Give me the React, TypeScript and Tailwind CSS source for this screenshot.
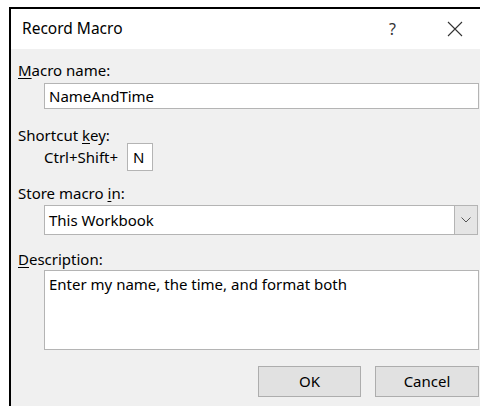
import { useState } from 'react';

function Label({ pre = '', acc, post }: { pre?: string; acc: string; post: string }) {
  return (
    <div className="h-[16px] leading-[16px] text-[15px] text-[#000]">
      {pre}
      <u className="underline-offset-2">{acc}</u>
      {post}
    </div>
  );
}

export default function App() {
  const [name, setName] = useState('NameAndTime');
  const [key, setKey] = useState('N');
  const [desc, setDesc] = useState('Enter my name, the time, and format both');

  return (
    <div
      className="h-[406px] w-[480px] overflow-hidden bg-white pl-[9px] pt-[7px]"
      style={{ fontFamily: '"Noto Sans", "Liberation Sans", sans-serif' }}
    >
      <div className="flex h-full flex-col border-l-2 border-t-2 border-black">
        {/* title bar */}
        <div className="flex h-[40px] shrink-0 items-center bg-white pl-[11px]">
          <span className="text-[15.5px] text-[#000]">Record Macro</span>
          <span className="ml-auto text-[16px] text-[#333]">?</span>
          <button className="ml-[51px] mr-[17px] flex h-[16px] w-[16px] items-center justify-center">
            <svg width="16" height="16" viewBox="0 0 16 16" fill="none" stroke="#333" strokeWidth="1.1">
              <path d="M1 1L15 15M15 1L1 15" />
            </svg>
          </button>
        </div>

        {/* form body */}
        <div className="flex flex-1 flex-col bg-[#f0f0f0] pl-[7px] pr-[1px] pt-[13px]">
          <Label acc="M" post="acro name:" />
          <input
            value={name}
            onChange={(e) => setName(e.target.value)}
            className="ml-[26px] mt-[5px] h-[26px] border border-[#b4b4b4] bg-white px-[4px] text-[15px] text-[#000] outline-none"
          />

          <div className="mt-[18px]">
            <Label pre="Shortcut " acc="k" post="ey:" />
          </div>
          <div className="ml-[26px] flex items-center">
            <span className="text-[15px] text-[#000]">Ctrl+Shift+</span>
            <input
              value={key}
              onChange={(e) => setKey(e.target.value)}
              className="ml-[9px] h-[28px] w-[26px] border border-[#b4b4b4] bg-white px-[5px] text-[15px] text-[#000] outline-none"
            />
          </div>

          <div className="mt-[14px]">
            <Label pre="Store macro " acc="i" post="n:" />
          </div>
          <div className="ml-[26px] mr-[1px] mt-[4px] flex h-[30px] border border-[#b4b4b4] bg-white">
            <span className="flex flex-1 items-center px-[4px] text-[15px] text-[#000]">This Workbook</span>
            <span className="flex w-[23px] items-center justify-center border-l border-[#b4b4b4] bg-[#e5e5e5]">
              <svg width="10" height="6" viewBox="0 0 10 6" fill="none" stroke="#555" strokeWidth="1">
                <path d="M0.5 0.5L5 5L9.5 0.5" />
              </svg>
            </span>
          </div>

          <div className="mt-[16px]">
            <Label acc="D" post="escription:" />
          </div>
          <textarea
            value={desc}
            onChange={(e) => setDesc(e.target.value)}
            className="ml-[26px] mt-[3px] h-[80px] resize-none border border-[#b4b4b4] bg-white px-[4px] pt-[3px] text-[15px] leading-[20px] text-[#000] outline-none"
          />

          <div className="mt-[16px] flex justify-end gap-[14px]">
            <button className="h-[31px] w-[103px] border border-[#adadad] bg-[#e1e1e1] text-[15px] text-[#000]">
              OK
            </button>
            <button className="h-[31px] w-[104px] border border-[#adadad] bg-[#e1e1e1] text-[15px] text-[#000]">
              Cancel
            </button>
          </div>
        </div>
      </div>
    </div>
  );
}
